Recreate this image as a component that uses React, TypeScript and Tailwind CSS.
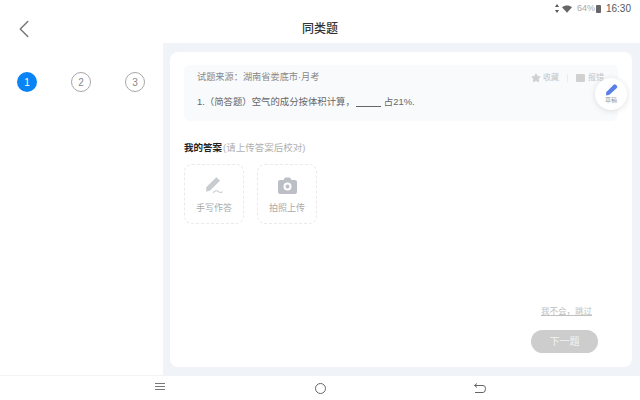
import { ChevronLeft, Star } from "lucide-react";

const font = { fontFamily: '"Liberation Sans", "Noto Sans CJK SC", sans-serif' };

const steps = ["1", "2", "3"];

function StatusBar() {
  return (
    <div className="flex h-[15px] items-center justify-end pr-[9px] pt-[2px]">
      <svg width="4" height="9" viewBox="0 0 4 9" className="mr-[3px]">
        <path d="M2 0 L4 3 H0 Z M2 9 L0 6 H4 Z" fill="#555" />
      </svg>
      <svg width="10" height="8" viewBox="0 0 12 9" className="mr-[5px]">
        <path d="M0 2.5 C3.5 -0.6 8.5 -0.6 12 2.5 L6 9 Z" fill="#666" />
      </svg>
      <span className="text-[9px] leading-none text-[#a8a8a8]">64%</span>
      <span className="mr-[5px] ml-[1px] h-[8px] w-[5px] rounded-[1px] bg-[#666]" />
      <span className="text-[10px] leading-none text-[#555]">16:30</span>
    </div>
  );
}

function Sidebar() {
  return (
    <div className="flex w-[163px] shrink-0 items-start justify-between bg-white pt-[29px] pr-[18px] pl-[17px]">
      {steps.map((step, i) => (
        <div
          key={step}
          className={
            i === 0
              ? "flex h-5 w-5 items-center justify-center rounded-full bg-[#0a84f5] text-[10px] text-white"
              : "flex h-5 w-5 items-center justify-center rounded-full border border-[#a8a8a8] text-[10px] text-[#888]"
          }
        >
          {step}
        </div>
      ))}
    </div>
  );
}

function UploadTile({ label, icon }: { label: string; icon: React.ReactNode }) {
  return (
    <div className="flex h-[60px] w-[60px] flex-col items-center rounded-lg border border-dashed border-[#eaeaea] pt-[9px]">
      <div className="flex h-[22px] items-center justify-center">{icon}</div>
      <span className="mt-[8px] text-[9px] leading-none text-[#aaa]">{label}</span>
    </div>
  );
}

export default function App() {
  return (
    <div className="flex h-[400px] w-[640px] flex-col overflow-hidden bg-white" style={font}>
      <StatusBar />
      <div className="relative flex h-[28px] items-center justify-center">
        <ChevronLeft className="absolute top-[-1px] left-[9px] h-[30px] w-[30px] text-[#777]" strokeWidth={1.2} />
        <span className="text-[12px] font-medium text-[#333]">同类题</span>
      </div>

      <div className="flex h-[333px] border-b border-[#f2f3f5]">
        <Sidebar />
        <div className="flex-1 bg-[#f0f3f7] pt-[9px] pr-2 pb-2 pl-[7px]">
          <div className="relative flex h-full flex-col rounded-lg bg-white pt-[13px] pr-[14px] pl-[14px]">
            <div className="h-[56px] rounded-md bg-[#f8fafc] pt-[6px] pr-[14px] pl-[13px]">
              <div className="flex items-center justify-between">
                <span className="text-[9.2px] leading-[13px] text-[#888]">试题来源：湖南省娄底市·月考</span>
                <div className="flex items-center text-[8px] leading-none text-[#c4c4c4]">
                  <Star className="mr-[2px] h-[10px] w-[10px] fill-[#d0d0d0] text-[#d0d0d0]" />
                  <span>收藏</span>
                  <span className="mx-[8px] h-[8px] w-px bg-[#ececec]" />
                  <span className="mr-[3px] h-[8px] w-[9px] rounded-[1px] bg-[#d0d0d0]" />
                  <span>报错</span>
                </div>
              </div>
              <div className="mt-[12px] flex items-center text-[9.4px] leading-[12px] text-[#666]">
                <span>1.（简答题）空气的成分按体积计算，</span>
                <span className="mt-[9px] mr-[1px] ml-[1px] h-px w-[25px] bg-[#666]" />
                <span className="ml-[2px]">占21%.</span>
              </div>
            </div>

            <div className="absolute top-[26px] right-[5px] flex h-[32px] w-[32px] flex-col items-center rounded-full bg-white pt-[4px] shadow-[0_1px_6px_rgba(0,0,0,0.12)]">
              <svg width="15" height="15" viewBox="0 0 14 14">
                <path d="M2 9.5 L9 2.5 Q10 1.5 11 2.5 L12 3.5 Q13 4.5 12 5.5 L5 12 L2 12.5 Z" fill="#5b7fe8" />
              </svg>
              <span className="text-[6px] leading-[7px] text-[#999]">草稿</span>
            </div>

            <div className="mt-[20px] text-[9.5px] leading-[14px]">
              <span className="font-bold text-[#222]">我的答案</span>
              <span className="ml-[1px] text-[#b0b0b0]">(请上传答案后校对)</span>
            </div>

            <div className="mt-[9px] flex gap-[13px]">
              <UploadTile
                label="手写作答"
                icon={
                  <svg width="20" height="20" viewBox="0 0 18 18">
                    <path d="M2 11 L11 2 L14.5 5 L5.5 14 L2 15 Z" fill="#c8cbd0" />
                    <path d="M8 16 Q11 13 13 15 Q15 16.5 17 15" stroke="#c8cbd0" strokeWidth="1" fill="none" />
                  </svg>
                }
              />
              <UploadTile
                label="拍照上传"
                icon={
                  <svg width="19" height="17" viewBox="0 0 19 17">
                    <path
                      fillRule="evenodd"
                      d="M2 3 H5.5 L7 0.5 H12 L13.5 3 H17 Q19 3 19 5 V15 Q19 17 17 17 H2 Q0 17 0 15 V5 Q0 3 2 3 Z M9.5 5.5 A4 4 0 1 0 9.5 13.5 A4 4 0 1 0 9.5 5.5 Z M9.5 7.5 A2 2 0 1 1 9.5 11.5 A2 2 0 1 1 9.5 7.5 Z"
                      fill="#bcbfc5"
                    />
                  </svg>
                }
              />
            </div>

            <div className="flex-1" />
            <div className="flex flex-col items-end pr-[20px] pb-[14px]">
              <span className="mr-[6px] text-[8.5px] leading-[12px] text-[#c0c0c0] underline">我不会，跳过</span>
              <div className="mt-[13px] flex h-[23px] w-[67px] items-center justify-center rounded-full bg-[#cdcdcd] text-[10px] text-[#f4f4f4]">
                下一题
              </div>
            </div>
          </div>
        </div>
      </div>

      <div className="relative flex-1 bg-white">
        <div className="absolute top-[7px] left-[155px] flex w-[10px] flex-col gap-[2px]">
          <span className="h-px bg-[#777]" />
          <span className="h-px bg-[#777]" />
          <span className="h-px bg-[#777]" />
        </div>
        <div className="absolute top-[7px] left-[315px] h-[11px] w-[11px] rounded-full border border-[#666]" />
        <svg width="14" height="11" viewBox="0 0 14 11" className="absolute top-[7px] left-[473px]">
          <path d="M4 0.5 L1.5 2.5 L4 4.5 M1.5 2.5 H10 Q12.5 2.5 12.5 5.5 Q12.5 9.5 10 9.5 H2" stroke="#666" fill="none" strokeWidth="1" />
        </svg>
      </div>
    </div>
  );
}
